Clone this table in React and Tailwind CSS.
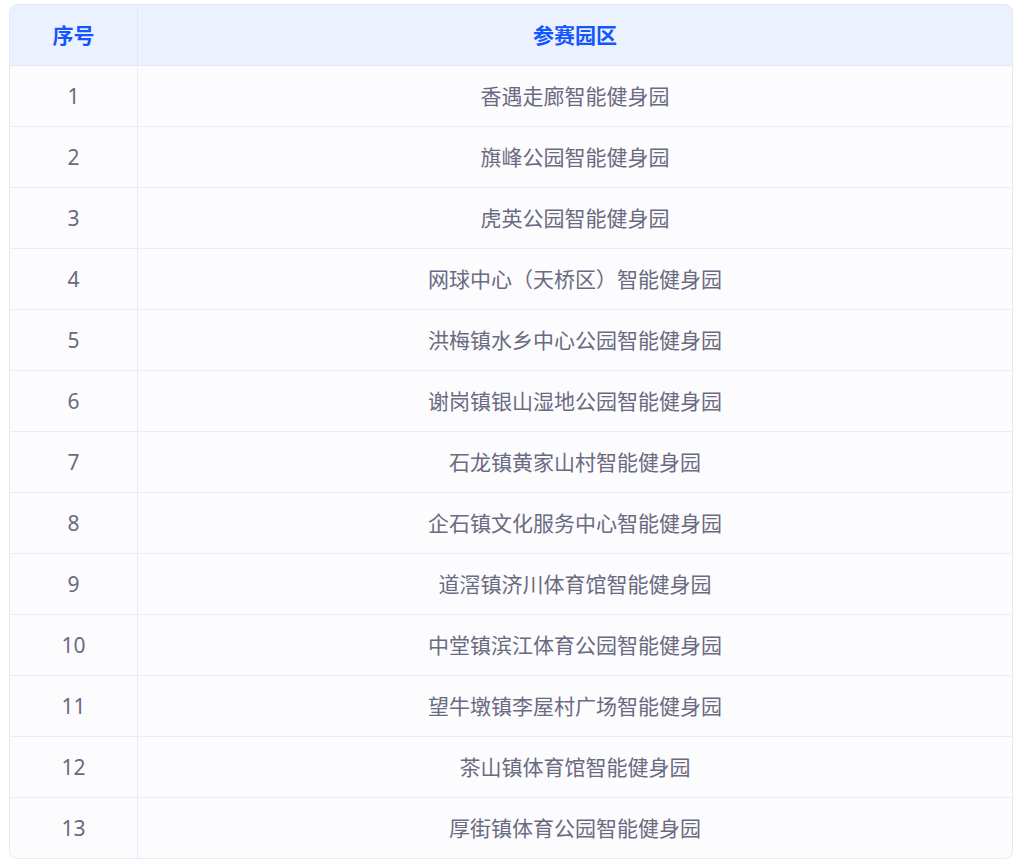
const parks = [
  "香遇走廊智能健身园",
  "旗峰公园智能健身园",
  "虎英公园智能健身园",
  "网球中心（天桥区）智能健身园",
  "洪梅镇水乡中心公园智能健身园",
  "谢岗镇银山湿地公园智能健身园",
  "石龙镇黄家山村智能健身园",
  "企石镇文化服务中心智能健身园",
  "道滘镇济川体育馆智能健身园",
  "中堂镇滨江体育公园智能健身园",
  "望牛墩镇李屋村广场智能健身园",
  "茶山镇体育馆智能健身园",
  "厚街镇体育公园智能健身园",
];

export default function App() {
  return (
    <div
      className="min-h-[868px] bg-white px-[9px] pt-[4px]"
      style={{ fontFamily: '"Noto Sans", "Noto Sans CJK SC", sans-serif' }}
    >
      <div className="overflow-hidden rounded-lg border border-[#e6e9f0] bg-[#fcfcff]">
        <div className="grid h-[61px] grid-cols-[128px_1fr] border-b border-[#e3e7f2] bg-[#ebf1fe] pt-[1px] text-[21px] font-bold text-[#1456ff]">
          <div className="flex items-center justify-center border-r border-[#e0e6f3]">序号</div>
          <div className="flex items-center justify-center">参赛园区</div>
        </div>
        {parks.map((name, i) => (
          <div
            key={name}
            className={
              i === parks.length - 1
                ? "grid h-[60px] grid-cols-[128px_1fr] text-[21px] text-[#6a6a80]"
                : "grid h-[61px] grid-cols-[128px_1fr] border-b border-[#ececf2] text-[21px] text-[#6a6a80]"
            }
          >
            <div className="flex items-center justify-center border-r border-[#ececf2] pt-[2px]">{i + 1}</div>
            <div className="flex items-center justify-center pt-[2px]">{name}</div>
          </div>
        ))}
      </div>
    </div>
  );
}
